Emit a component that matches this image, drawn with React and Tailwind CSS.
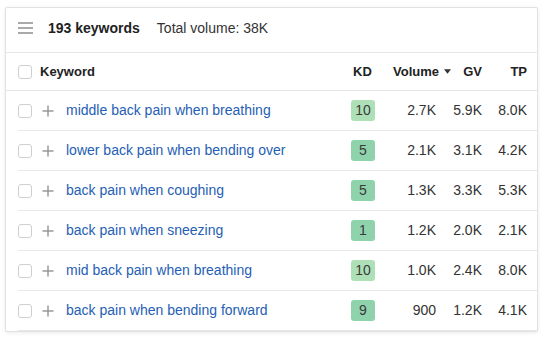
import React from 'react';

const rows = [
  { kw: 'middle back pain when breathing', kd: 10, vol: '2.7K', gv: '5.9K', tp: '8.0K' },
  { kw: 'lower back pain when bending over', kd: 5, vol: '2.1K', gv: '3.1K', tp: '4.2K' },
  { kw: 'back pain when coughing', kd: 5, vol: '1.3K', gv: '3.3K', tp: '5.3K' },
  { kw: 'back pain when sneezing', kd: 1, vol: '1.2K', gv: '2.0K', tp: '2.1K' },
  { kw: 'mid back pain when breathing', kd: 10, vol: '1.0K', gv: '2.4K', tp: '8.0K' },
  { kw: 'back pain when bending forward', kd: 9, vol: '900', gv: '1.2K', tp: '4.1K' },
];

const Checkbox = () => (
  <span className="block w-[14px] h-[14px] shrink-0 rounded-[3px] border border-[#cfcfcf] bg-white" />
);

const Plus = () => (
  <svg width="12" height="12" viewBox="0 0 12 12" className="shrink-0">
    <path d="M6 0.5v11M0.5 6h11" stroke="#999" strokeWidth="1.5" />
  </svg>
);

const App = () => {
  return (
    <div className="w-[541px] h-[337px] bg-white pt-[7px] pl-[5px] font-['Liberation_Sans',Arial,sans-serif] text-[#333]">
      <div className="w-[533px] h-[325px] border border-[#e2e2e2] rounded-[2px] shadow-[0_1px_4px_rgba(0,0,0,0.08)] bg-white overflow-hidden">
        {/* Summary bar */}
        <div className="h-[45px] flex items-center pl-[12px] pb-[4px] border-b border-[#e6e6e6]">
          <svg width="15" height="12" viewBox="0 0 15 12">
            <path d="M0 1h15M0 6h15M0 11h15" stroke="#a9a9a9" strokeWidth="2" />
          </svg>
          <span className="ml-[15px] text-[14px] font-bold text-[#222]">193 keywords</span>
          <span className="ml-[17px] text-[14px] text-[#333]">Total volume: 38K</span>
        </div>

        {/* Column headers */}
        <div className="h-[38px] flex items-center pl-[12px] pr-[10px] border-b border-[#e6e6e6] text-[13px] font-bold text-[#222]">
          <Checkbox />
          <span className="ml-[8px] flex-1">Keyword</span>
          <span className="w-[48px] pl-[14px]">KD</span>
          <span className="w-[64px] pl-[6px] flex items-center gap-[5px]">
            Volume
            <svg width="8" height="5" viewBox="0 0 8 5">
              <path d="M0 0h8L4 5z" fill="#333" />
            </svg>
          </span>
          <span className="w-[31px] text-right">GV</span>
          <span className="w-[45px] text-right">TP</span>
        </div>

        {/* Rows */}
        {rows.map((r) => (
          <div key={r.kw} className="ml-[12px] pr-[10px] h-[40px] flex items-center border-b border-[#e8e8e8] text-[14px]">
            <Checkbox />
            <span className="ml-[10px]"><Plus /></span>
            <a href="#" className="ml-[12px] flex-1 text-[#2560b4]">{r.kw}</a>
            <span className="w-[48px] flex justify-center">
              <span
                className={
                  'w-[24px] h-[21px] rounded-[3px] flex items-center justify-center text-[#3a3a3a] ' +
                  (r.kd >= 10 ? 'bg-[#aee0b8]' : 'bg-[#8fd3ad]')
                }
              >
                {r.kd}
              </span>
            </span>
            <span className="w-[49px] text-right">{r.vol}</span>
            <span className="w-[46px] text-right">{r.gv}</span>
            <span className="w-[45px] text-right">{r.tp}</span>
          </div>
        ))}
      </div>
    </div>
  );
};

export default App;
